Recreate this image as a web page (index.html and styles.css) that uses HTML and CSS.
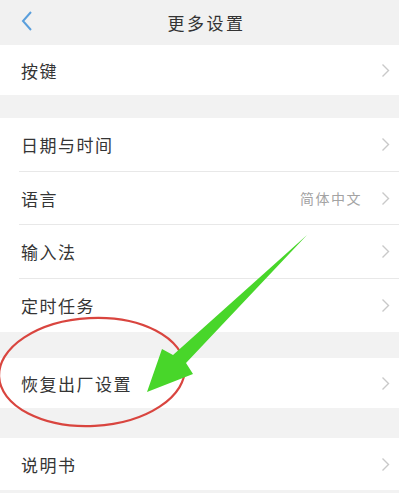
FILE: index.html
```html
<!DOCTYPE html>
<html lang="zh">
<head>
<meta charset="utf-8">
<link rel="stylesheet" href="styles.css">
</head>
<body>
<div class="screen">
  <header class="topbar">
    <svg class="back" width="14" height="22" viewBox="0 0 14 22"><polyline points="11,2 3,11 11,20" fill="none" stroke="#5a9fdc" stroke-width="2"/></svg>
    <div class="title">更多设置</div>
  </header>

  <section class="group g1">
    <div class="row h50"><span class="label">按键</span><svg class="chev" width="9" height="15" viewBox="0 0 9 15"><polyline points="1.5,1.5 7.5,7.5 1.5,13.5" fill="none" stroke="#c9c9c9" stroke-width="1.4"/></svg></div>
  </section>

  <section class="group g2">
    <div class="row sep"><span class="label">日期与时间</span><svg class="chev" width="9" height="15" viewBox="0 0 9 15"><polyline points="1.5,1.5 7.5,7.5 1.5,13.5" fill="none" stroke="#c9c9c9" stroke-width="1.4"/></svg></div>
    <div class="row sep"><span class="label">语言</span><span class="value">简体中文</span><svg class="chev" width="9" height="15" viewBox="0 0 9 15"><polyline points="1.5,1.5 7.5,7.5 1.5,13.5" fill="none" stroke="#c9c9c9" stroke-width="1.4"/></svg></div>
    <div class="row sep"><span class="label">输入法</span><svg class="chev" width="9" height="15" viewBox="0 0 9 15"><polyline points="1.5,1.5 7.5,7.5 1.5,13.5" fill="none" stroke="#c9c9c9" stroke-width="1.4"/></svg></div>
    <div class="row"><span class="label">定时任务</span><svg class="chev" width="9" height="15" viewBox="0 0 9 15"><polyline points="1.5,1.5 7.5,7.5 1.5,13.5" fill="none" stroke="#c9c9c9" stroke-width="1.4"/></svg></div>
  </section>

  <section class="group g3">
    <div class="row h50"><span class="label">恢复出厂设置</span><svg class="chev" width="9" height="15" viewBox="0 0 9 15"><polyline points="1.5,1.5 7.5,7.5 1.5,13.5" fill="none" stroke="#c9c9c9" stroke-width="1.4"/></svg></div>
  </section>

  <section class="group g4">
    <div class="row h52"><span class="label">说明书</span><svg class="chev" width="9" height="15" viewBox="0 0 9 15"><polyline points="1.5,1.5 7.5,7.5 1.5,13.5" fill="none" stroke="#c9c9c9" stroke-width="1.4"/></svg></div>
  </section>

  <svg class="annot" width="399" height="493" viewBox="0 0 399 493">
    <ellipse cx="92" cy="372" rx="93" ry="54" fill="none" stroke="#d9453f" stroke-width="2.2" transform="rotate(-3 92 372)"/>
    <polygon points="307,235 186,363 193,374 147,392 162,349 173,355" fill="#48d62a"/>
  </svg>
</div>
</body>
</html>
```

FILE: styles.css
```css
* { box-sizing: border-box; }
html, body { margin: 0; padding: 0; }
body {
  background: #f2f2f2;
  font-family: "Noto Sans CJK SC", "Noto Sans", sans-serif;
  color: #333;
}
.screen {
  position: relative;
  width: 399px;
  height: 493px;
  overflow: hidden;
  background: #f2f2f2;
}
.topbar {
  height: 45px;
  position: relative;
  display: flex;
  align-items: center;
  justify-content: center;
  background: #f1f1f1;
}
.back {
  position: absolute;
  left: 20px;
  top: 10px;
}
.title {
  font-size: 17px;
  letter-spacing: 2.5px;
  color: #333;
  padding-left: 14px;
}
.group { background: #fff; }
.g2 { margin-top: 23px; }
.g3 { margin-top: 26px; }
.g4 { margin-top: 30px; }
.row {
  height: 53.5px;
  display: flex;
  align-items: center;
  padding-left: 21px;
  padding-right: 9px;
  position: relative;
}
.row.h50 { height: 50px; }
.row.h52 { height: 52px; }
.row.sep::after {
  content: "";
  position: absolute;
  left: 19px;
  right: 0;
  bottom: 0;
  height: 1px;
  background: #e8e8e8;
}
.label {
  flex: 1;
  font-size: 17px;
  letter-spacing: 1.5px;
  color: #353535;
}
.value {
  font-size: 14px;
  letter-spacing: 1.5px;
  color: #a3a3a3;
  margin-right: 19px;
}
.chev { display: block; }
.annot {
  position: absolute;
  left: 0;
  top: 0;
  pointer-events: none;
}
```
